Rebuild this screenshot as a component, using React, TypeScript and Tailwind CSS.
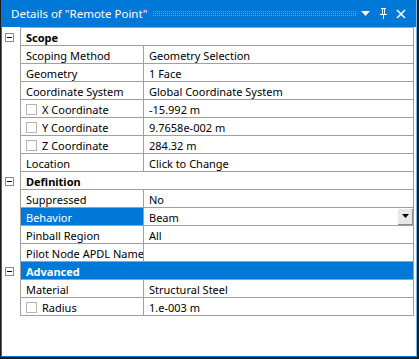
import React from 'react';

type Row =
    | { kind: 'section'; label: string; selected?: boolean }
    | { kind: 'prop'; label: string; value: string; check?: boolean; selected?: boolean; dropdown?: boolean };

const rows: Row[] = [
    { kind: 'section', label: 'Scope' },
    { kind: 'prop', label: 'Scoping Method', value: 'Geometry Selection' },
    { kind: 'prop', label: 'Geometry', value: '1 Face' },
    { kind: 'prop', label: 'Coordinate System', value: 'Global Coordinate System' },
    { kind: 'prop', label: 'X Coordinate', value: '-15.992 m', check: true },
    { kind: 'prop', label: 'Y Coordinate', value: '9.7658e-002 m', check: true },
    { kind: 'prop', label: 'Z Coordinate', value: '284.32 m', check: true },
    { kind: 'prop', label: 'Location', value: 'Click to Change' },
    { kind: 'section', label: 'Definition' },
    { kind: 'prop', label: 'Suppressed', value: 'No' },
    { kind: 'prop', label: 'Behavior', value: 'Beam', selected: true, dropdown: true },
    { kind: 'prop', label: 'Pinball Region', value: 'All' },
    { kind: 'prop', label: 'Pilot Node APDL Name', value: '' },
    { kind: 'section', label: 'Advanced', selected: true },
    { kind: 'prop', label: 'Material', value: 'Structural Steel' },
    { kind: 'prop', label: 'Radius', value: '1.e-003 m', check: true },
];

function Expander() {
    return (
        <div className="w-[9px] h-[9px] border border-[#8a8a8a] bg-white flex items-center justify-center">
            <div className="w-[5px] h-px bg-black" />
        </div>
    );
}

function CheckBox() {
    return <div className="w-[11px] h-[11px] border border-[#b4b4b4] bg-white mr-[5px] shrink-0" />;
}

function DropButton() {
    return (
        <div className="w-[15px] h-[16px] bg-[#e8e8e8] border-r border-b border-[#8c8c8c] flex items-center justify-center shrink-0">
            <svg width="7" height="4" viewBox="0 0 7 4">
                <path d="M0 0h7L3.5 4z" fill="#000" />
            </svg>
        </div>
    );
}

function TitleBar() {
    return (
        <div className="h-[27px] bg-[#0078d7] flex items-center pl-[9px] pr-[10px] text-white">
            <span className="text-[11.5px] leading-none whitespace-nowrap">Details of "Remote Point"</span>
            <svg className="ml-[5px] flex-1" height="6" width="100%">
                <defs>
                    <pattern id="dots" width="2" height="2" patternUnits="userSpaceOnUse">
                        <rect x="0" y="0" width="1" height="1" fill="#5aa5e4" />
                    </pattern>
                </defs>
                <rect width="100%" height="6" fill="url(#dots)" />
            </svg>
            <svg className="ml-[4px]" width="9" height="5" viewBox="0 0 9 5">
                <path d="M0 0h9L4.5 5z" fill="#fff" />
            </svg>
            <svg className="ml-[9px]" width="9" height="11" viewBox="0 0 9 11">
                <path d="M2 0h5v1H6v5h2v1H5v4H4V7H1V6h2V1H2z M4 1v5h1V1z" fill="#fff" fillRule="evenodd" />
            </svg>
            <svg className="ml-[8px]" width="10" height="10" viewBox="0 0 10 10">
                <path d="M1 1l8 8M9 1l-8 8" stroke="#fff" strokeWidth="1.6" />
            </svg>
        </div>
    );
}

export default function App() {
    return (
        <div
            className="w-[419px] h-[359px] bg-[#1c1c1c] pl-px pr-[2px] pb-[2px] text-[11px] leading-none text-black"
            style={{ fontFamily: '"Noto Sans", "Liberation Sans", sans-serif' }}
        >
            <div className="h-full flex flex-col border-l border-r border-b border-[#0078d7] border-r-[#7ab4e6] bg-white">
                <TitleBar />
                <div className="pt-px pr-[2px]">
                    {rows.map((r, i) => (
                        <div key={i} className="flex h-[18px]">
                            <div className="w-[18px] pl-[3px] flex items-center">
                                {r.kind === 'section' && <Expander />}
                            </div>
                            <div
                                className={
                                    'flex-1 flex border-l border-r border-b border-[#a0a0a0] ' +
                                    (i === 0 ? 'border-t h-[19px] -mt-px' : '')
                                }
                            >
                                {r.kind === 'section' ? (
                                    <div
                                        className={
                                            'flex-1 flex items-center pl-[5px] pt-px font-bold ' +
                                            (r.selected ? 'bg-[#0078d7] text-white' : '')
                                        }
                                    >
                                        {r.label}
                                    </div>
                                ) : (
                                    <>
                                        <div
                                            className={
                                                'w-[123px] shrink-0 flex items-center pl-[5px] pt-px border-r border-[#a0a0a0] whitespace-nowrap overflow-hidden ' +
                                                (r.selected ? 'bg-[#0078d7] text-white' : '')
                                            }
                                        >
                                            {r.check && <CheckBox />}
                                            {r.label}
                                        </div>
                                        <div className="flex-1 flex items-center pl-[5px] whitespace-nowrap">
                                            <span className="flex-1 pt-px">{r.value}</span>
                                            {r.dropdown && <DropButton />}
                                        </div>
                                    </>
                                )}
                            </div>
                        </div>
                    ))}
                </div>
            </div>
        </div>
    );
}
